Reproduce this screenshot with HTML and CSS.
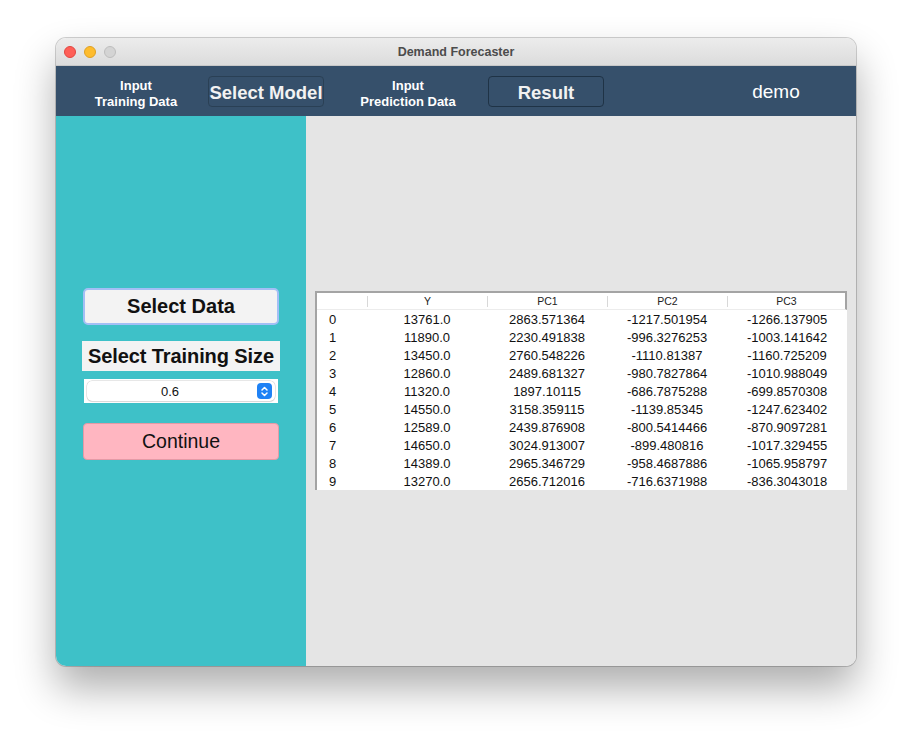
FILE: index.html
```html
<!DOCTYPE html>
<html>
<head>
<meta charset="utf-8">
<link rel="stylesheet" href="styles.css">
</head>
<body>
<div class="window">
  <div class="titlebar">
    <div class="lights">
      <span class="light red"></span>
      <span class="light yellow"></span>
      <span class="light gray"></span>
    </div>
    <div class="title">Demand Forecaster</div>
  </div>
  <div class="nav">
    <div class="nav-label n1">Input<br>Training Data</div>
    <div class="nav-btn n2">Select Model</div>
    <div class="nav-label n3">Input<br>Prediction Data</div>
    <div class="nav-btn n4">Result</div>
    <div class="nav-user n5">demo</div>
  </div>
  <div class="content">
    <div class="side">
      <div class="btn-select">Select Data</div>
      <div class="label-size">Select Training Size</div>
      <div class="select-wrap">
        <div class="select">
          <span class="select-val">0.6</span>
          <span class="spinner">
            <svg width="11" height="13" viewBox="0 0 11 13"><path d="M3 5 L5.5 2.5 L8 5 M3 8 L5.5 10.5 L8 8" fill="none" stroke="#fff" stroke-width="1.5" stroke-linecap="round" stroke-linejoin="round"/></svg>
          </span>
        </div>
      </div>
      <div class="btn-continue">Continue</div>
    </div>
    <div class="main">
      <table class="data">
        <thead>
          <tr><th class="idx"><span></span></th><th><span>Y</span></th><th><span>PC1</span></th><th><span>PC2</span></th><th class="last"><span>PC3</span></th></tr>
        </thead>
        <tbody>
          <tr><td class="idx">0</td><td>13761.0</td><td>2863.571364</td><td>-1217.501954</td><td>-1266.137905</td></tr>
          <tr><td class="idx">1</td><td>11890.0</td><td>2230.491838</td><td>-996.3276253</td><td>-1003.141642</td></tr>
          <tr><td class="idx">2</td><td>13450.0</td><td>2760.548226</td><td>-1110.81387</td><td>-1160.725209</td></tr>
          <tr><td class="idx">3</td><td>12860.0</td><td>2489.681327</td><td>-980.7827864</td><td>-1010.988049</td></tr>
          <tr><td class="idx">4</td><td>11320.0</td><td>1897.10115</td><td>-686.7875288</td><td>-699.8570308</td></tr>
          <tr><td class="idx">5</td><td>14550.0</td><td>3158.359115</td><td>-1139.85345</td><td>-1247.623402</td></tr>
          <tr><td class="idx">6</td><td>12589.0</td><td>2439.876908</td><td>-800.5414466</td><td>-870.9097281</td></tr>
          <tr><td class="idx">7</td><td>14650.0</td><td>3024.913007</td><td>-899.480816</td><td>-1017.329455</td></tr>
          <tr><td class="idx">8</td><td>14389.0</td><td>2965.346729</td><td>-958.4687886</td><td>-1065.958797</td></tr>
          <tr><td class="idx">9</td><td>13270.0</td><td>2656.712016</td><td>-716.6371988</td><td>-836.3043018</td></tr>
        </tbody>
      </table>
    </div>
  </div>
</div>
</body>
</html>
```

FILE: styles.css
```css
html, body {
  margin: 0;
  padding: 0;
  background: #ffffff;
  font-family: "Liberation Sans", Arial, sans-serif;
}
body {
  padding: 38px 0 0 56px;
  height: 740px;
  box-sizing: border-box;
}
.window {
  width: 800px;
  height: 628px;
  border-radius: 10px;
  overflow: hidden;
  box-shadow: 0 0 0 1px rgba(0,0,0,0.18), 0 22px 40px rgba(0,0,0,0.32);
  display: flex;
  flex-direction: column;
}
.titlebar {
  height: 28px;
  background: linear-gradient(#ececec, #dcdcdc);
  border-bottom: 1px solid #c8c8c8;
  box-sizing: border-box;
  display: flex;
  align-items: center;
  position: relative;
}
.lights {
  display: flex;
  gap: 8px;
  padding-left: 8px;
}
.light {
  width: 12px;
  height: 12px;
  border-radius: 50%;
  box-sizing: border-box;
}
.red { background: #fe5f57; border: 0.5px solid #e14640; }
.yellow { background: #febc2e; border: 0.5px solid #dfa023; }
.gray { background: #d4d4d4; border: 0.5px solid #bdbdbd; }
.title {
  position: absolute;
  left: 0;
  right: 0;
  text-align: center;
  font-size: 12.5px;
  font-weight: bold;
  color: #4c4c4c;
  pointer-events: none;
}
.nav {
  height: 50px;
  background: #36506b;
  display: flex;
  align-items: center;
  padding-left: 22px;
}
.nav-label {
  width: 116px;
  text-align: center;
  color: #ffffff;
  font-weight: bold;
  font-size: 13px;
  line-height: 16px;
  padding-top: 5px;
  white-space: nowrap;
}
.nav-btn {
  width: 116px;
  height: 31px;
  box-sizing: border-box;
  border: 1px solid #1f3346;
  border-radius: 4px;
  color: #f2f2f2;
  font-weight: bold;
  font-size: 18.5px;
  display: flex;
  align-items: center;
  justify-content: center;
  padding-top: 3px;
  white-space: nowrap;
}
.n2 { margin-left: 14px; border-color: #2a4055; }
.n3 { margin-left: 26px; }
.n4 { margin-left: 22px; }
.nav-user {
  width: 116px;
  margin-left: 114px;
  text-align: center;
  color: #ffffff;
  font-size: 19px;
  margin-top: 2px;
}
.content {
  flex: 1;
  display: flex;
}
.side {
  width: 250px;
  background: #3ec1c8;
  display: flex;
  flex-direction: column;
  align-items: center;
  padding-top: 172px;
  box-sizing: border-box;
}
.btn-select {
  width: 196px;
  height: 37px;
  box-sizing: border-box;
  background: #f3f3f3;
  border: 2px solid #a3bff5;
  border-radius: 5px;
  display: flex;
  align-items: center;
  justify-content: center;
  font-weight: bold;
  font-size: 20px;
  color: #111;
}
.label-size {
  margin-top: 16px;
  width: 198px;
  height: 30px;
  background: #f3f3f3;
  display: flex;
  align-items: center;
  justify-content: center;
  font-weight: bold;
  font-size: 20px;
  letter-spacing: -0.1px;
  color: #111;
  white-space: nowrap;
}
.select-wrap {
  margin-top: 8px;
  width: 194px;
  height: 24px;
  background: #ffffff;
  display: flex;
  align-items: center;
  justify-content: center;
}
.select {
  width: 188px;
  height: 20px;
  box-sizing: border-box;
  border-radius: 5px;
  box-shadow: 0 0 0 0.5px #d0d0d0, 0 1px 1px rgba(0,0,0,0.12);
  display: flex;
  align-items: center;
  position: relative;
}
.select-val {
  flex: 1;
  text-align: center;
  font-size: 13px;
  color: #111;
  padding-right: 4px;
}
.spinner {
  width: 15px;
  height: 16px;
  border-radius: 4px;
  background: #1f82f5;
  display: flex;
  align-items: center;
  justify-content: center;
  margin-right: 3px;
}
.btn-continue {
  margin-top: 20px;
  width: 196px;
  height: 37px;
  box-sizing: border-box;
  background: #ffb6c1;
  border: 1px solid #e49aa6;
  border-radius: 4px;
  display: flex;
  align-items: center;
  justify-content: center;
  font-size: 19.5px;
  color: #111;
}
.main {
  flex: 1;
  background: #e5e5e5;
  padding: 175px 0 0 9px;
}
.data {
  width: 532px;
  border-collapse: separate;
  border-spacing: 0;
  background: #ffffff;
  border-left: 2px solid #a4a4a4;
  border-top: 2px solid #a4a4a4;
  font-family: "Liberation Sans", Arial, sans-serif;
  table-layout: fixed;
}
.data th {
  height: 16px;
  padding: 0;
  font-weight: normal;
  font-size: 10.5px;
  color: #222;
  width: 120px;
  border-bottom: 1px solid #ececec;
}
.data th.idx { width: 50px; }
.data th.last { width: 118px; border-right: 2px solid #a4a4a4; }
.data th span {
  display: block;
  border-left: 1px solid #d8d8d8;
  height: 11px;
  line-height: 11px;
}
.data th.idx span { border-left: none; }
.data td {
  height: 18px;
  padding: 0;
  text-align: center;
  font-size: 13px;
  color: #111;
}
.data td.idx {
  text-align: left;
  padding-left: 12px;
}
```
